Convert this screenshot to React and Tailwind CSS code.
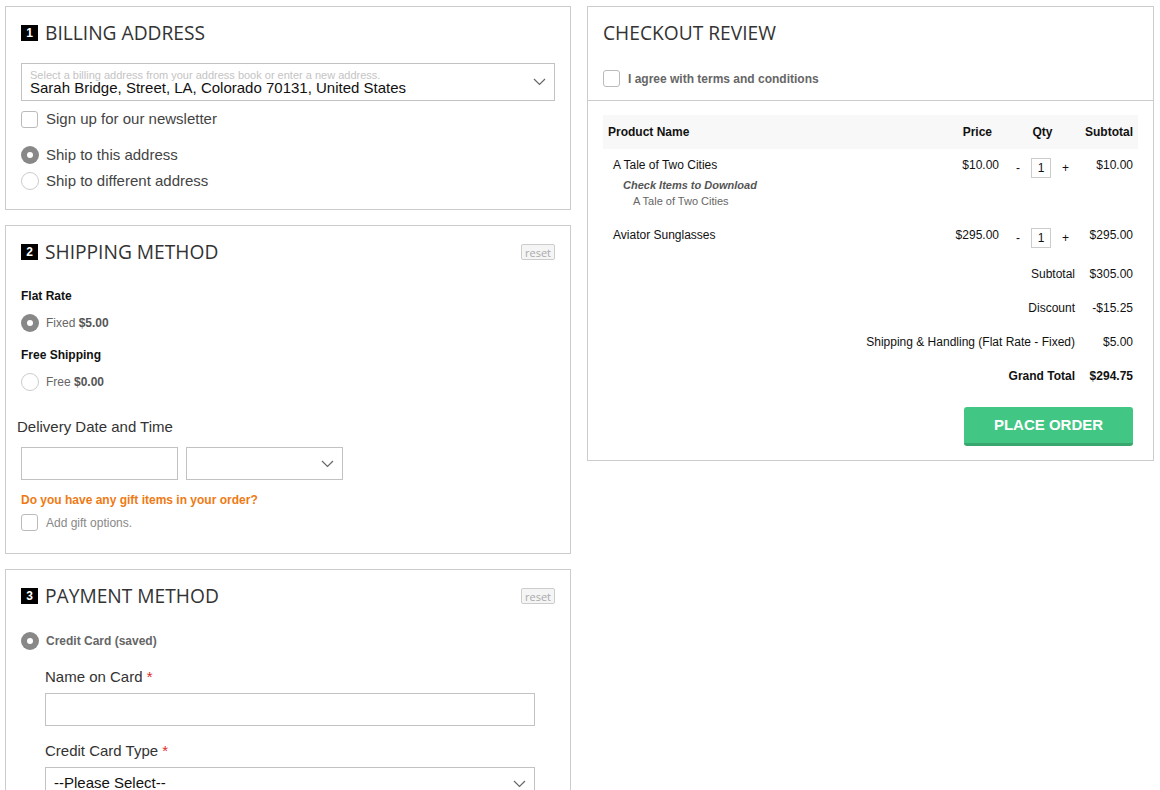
import { useState } from "react"

const heading = "font-['Open_Sans',sans-serif] text-[19.2px] text-[#333] leading-[26px]"

function Chevron() {
  return (
    <svg width="13" height="8" viewBox="0 0 13 8" fill="none" className="shrink-0">
      <polyline points="1,1 6.5,6.5 12,1" stroke="#666" strokeWidth="1.2" />
    </svg>
  )
}

function StepHeading({ n, title, reset }) {
  return (
    <div className="flex items-center h-[26px]">
      {n && (
        <span className="w-[17px] h-[16px] bg-black text-white text-[12px] font-bold flex items-center justify-center mr-[7px] leading-none">
          {n}
        </span>
      )}
      <h2 className={heading}>{title}</h2>
      {reset && (
        <button className="ml-auto w-[34px] h-[16px] border border-[#ccc] bg-[#f5f5f5] rounded-[2px] text-[11px] text-[#aaa] leading-none font-['Open_Sans',sans-serif]">
          reset
        </button>
      )}
    </div>
  )
}

function Checkbox({ checked, onClick }) {
  return (
    <span
      onClick={onClick}
      className="w-[17px] h-[17px] rounded-[3px] border border-[#bbb] bg-white shrink-0 flex items-center justify-center"
    >
      {checked && <span className="w-[9px] h-[9px] bg-[#888] rounded-[1px]" />}
    </span>
  )
}

function Radio({ checked, onClick }) {
  return checked ? (
    <span onClick={onClick} className="w-[18px] h-[18px] rounded-full bg-[#888] shrink-0 flex items-center justify-center">
      <span className="w-[6px] h-[6px] rounded-full bg-white" />
    </span>
  ) : (
    <span onClick={onClick} className="w-[18px] h-[18px] rounded-full border border-[#ccc] bg-white shrink-0" />
  )
}

const card = "border border-[#ccc] bg-white px-[15px] pt-[13px]"

export default function App() {
  const [ship, setShip] = useState("same")
  const [method, setMethod] = useState("flat")
  const [newsletter, setNewsletter] = useState(false)
  const [gift, setGift] = useState(false)
  const [agree, setAgree] = useState(false)
  const [qty, setQty] = useState({ tale: 1, aviator: 1 })

  const items = [
    { id: "tale", name: "A Tale of Two Cities", price: 10, download: true },
    { id: "aviator", name: "Aviator Sunglasses", price: 295 },
  ]

  const changeQty = (id, d) => setQty((q) => ({ ...q, [id]: Math.max(1, q[id] + d) }))

  return (
    <div className="h-[790px] overflow-hidden bg-white font-['Liberation_Sans',Arial,sans-serif] text-[#333]">
      <div className="flex items-start pl-[5px] pt-[6px] gap-[16px]">
        {/* left column */}
        <div className="w-[566px] flex flex-col gap-[15px]">
          {/* Billing */}
          <div className={`${card} pb-[19px]`}>
            <StepHeading n="1" title="BILLING ADDRESS" />
            <div className="relative mt-[17px] h-[38px] border border-[#c2c2c2] pl-[8px] pt-[5px]">
              <div className="text-[11px] leading-[12px] text-[#c4c4c4]">
                Select a billing address from your address book or enter a new address.
              </div>
              <div className="text-[15px] leading-[14px] text-[#111]">
                Sarah Bridge, Street, LA, Colorado 70131, United States
              </div>
              <div className="absolute right-[8px] top-1/2 -translate-y-1/2">
                <Chevron />
              </div>
            </div>
            <label className="mt-[10px] h-[17px] flex items-center gap-[8px] text-[15px] text-[#444]">
              <Checkbox checked={newsletter} onClick={() => setNewsletter(!newsletter)} />
              Sign up for our newsletter
            </label>
            <label className="mt-[18px] h-[18px] flex items-center gap-[7px] text-[15px] text-[#444]">
              <Radio checked={ship === "same"} onClick={() => setShip("same")} />
              Ship to this address
            </label>
            <label className="mt-[8px] h-[18px] flex items-center gap-[7px] text-[15px] text-[#444]">
              <Radio checked={ship === "diff"} onClick={() => setShip("diff")} />
              Ship to different address
            </label>
          </div>

          {/* Shipping */}
          <div className={`${card} pb-[22px]`}>
            <StepHeading n="2" title="SHIPPING METHOD" reset />
            <div className="mt-[23px] text-[12px] leading-[16px] font-bold text-[#111]">Flat Rate</div>
            <label className="mt-[10px] h-[18px] flex items-center gap-[7px] text-[12px] text-[#666]">
              <Radio checked={method === "flat"} onClick={() => setMethod("flat")} />
              <span>
                Fixed <b className="text-[#555]">$5.00</b>
              </span>
            </label>
            <div className="mt-[15px] text-[12px] leading-[16px] font-bold text-[#111]">Free Shipping</div>
            <label className="mt-[10px] h-[18px] flex items-center gap-[7px] text-[12px] text-[#666]">
              <Radio checked={method === "free"} onClick={() => setMethod("free")} />
              <span>
                Free <b className="text-[#555]">$0.00</b>
              </span>
            </label>
            <div className="mt-[27px] -ml-[4px] text-[15px] leading-[18px] text-[#333]">Delivery Date and Time</div>
            <div className="mt-[11px] flex gap-[8px]">
              <input className="w-[157px] h-[33px] border border-[#c2c2c2] outline-none px-2 text-[13px]" />
              <div className="w-[157px] h-[33px] border border-[#c2c2c2] flex items-center justify-end pr-[8px]">
                <Chevron />
              </div>
            </div>
            <div className="mt-[12px] text-[12px] leading-[16px] font-bold text-[#ee7a14]">
              Do you have any gift items in your order?
            </div>
            <label className="mt-[6px] h-[17px] flex items-center gap-[8px] text-[12px] text-[#888]">
              <Checkbox checked={gift} onClick={() => setGift(!gift)} />
              Add gift options.
            </label>
          </div>

          {/* Payment */}
          <div className={`${card} pb-[30px]`}>
            <StepHeading n="3" title="PAYMENT METHOD" reset />
            <label className="mt-[23px] h-[18px] flex items-center gap-[7px] text-[12px] font-bold text-[#666]">
              <Radio checked />
              Credit Card (saved)
            </label>
            <div className="ml-[24px]">
              <div className="mt-[18px] text-[15px] leading-[18px] text-[#333]">
                Name on Card <span className="text-[#e02b27]">*</span>
              </div>
              <input className="mt-[7px] w-[490px] h-[33px] border border-[#c2c2c2] outline-none px-2 text-[15px]" />
              <div className="mt-[16px] text-[15px] leading-[18px] text-[#333]">
                Credit Card Type <span className="text-[#e02b27]">*</span>
              </div>
              <div className="mt-[7px] w-[490px] h-[33px] border border-[#c2c2c2] flex items-center justify-between pl-[8px] pr-[8px] text-[15px] text-[#111]">
                --Please Select--
                <Chevron />
              </div>
              <div className="mt-[16px] text-[15px] leading-[18px] text-[#333]">
                Credit Card Number <span className="text-[#e02b27]">*</span>
              </div>
              <input className="mt-[7px] w-[490px] h-[33px] border border-[#c2c2c2] outline-none px-2 text-[15px]" />
            </div>
          </div>
        </div>

        {/* right column */}
        <div className="w-[567px] border border-[#ccc] bg-white">
          <div className="px-[15px] pt-[13px] pb-[13px] border-b border-[#ccc]">
            <div className="flex items-center h-[26px]">
              <h2 className={heading}>CHECKOUT REVIEW</h2>
            </div>
            <label className="mt-[24px] h-[17px] flex items-center gap-[8px] text-[12px] font-bold text-[#666]">
              <Checkbox checked={agree} onClick={() => setAgree(!agree)} />
              I agree with terms and conditions
            </label>
          </div>

          <div className="px-[15px] pt-[14px] pb-[14px] text-[12px] text-[#111]">
            <div className="grid grid-cols-[1fr_81px_75px_58px] h-[34px] items-center bg-[#f8f8f8] font-bold">
              <div className="pl-[5px]">Product Name</div>
              <div className="text-right pr-[13px]">Price</div>
              <div className="text-center">Qty</div>
              <div className="text-right pr-[5px]">Subtotal</div>
            </div>

            {items.map((it, i) => (
              <div key={it.id} className={`grid grid-cols-[1fr_81px_75px_58px] items-start ${i > 0 ? "mt-[11px]" : ""}`}>
                <div className="pt-[8px] pl-[10px]">
                  <div className="leading-[16px]">{it.name}</div>
                  {it.download && (
                    <>
                      <div className="mt-[5px] pl-[10px] text-[11px] leading-[14px] font-bold italic text-[#555]">
                        Check Items to Download
                      </div>
                      <div className="mt-[2px] pl-[20px] text-[11px] leading-[14px] text-[#666]">{it.name}</div>
                    </>
                  )}
                </div>
                <div className="pt-[8px] leading-[16px] text-right pr-[6px]">${it.price.toFixed(2)}</div>
                <div className="pt-[9px] flex items-center justify-center gap-[11px]">
                  <button onClick={() => changeQty(it.id, -1)} className="leading-none">-</button>
                  <span className="w-[20px] h-[20px] border border-[#ccc] flex items-center justify-center leading-none">
                    {qty[it.id]}
                  </span>
                  <button onClick={() => changeQty(it.id, 1)} className="leading-none">+</button>
                </div>
                <div className="pt-[8px] leading-[16px] text-right pr-[5px]">
                  ${(it.price * qty[it.id]).toFixed(2)}
                </div>
              </div>
            ))}

            <div className="mt-[9px]">
              {[
                ["Subtotal", "$305.00"],
                ["Discount", "-$15.25"],
                ["Shipping & Handling (Flat Rate - Fixed)", "$5.00"],
                ["Grand Total", "$294.75", true],
              ].map(([label, value, bold]) => (
                <div key={label} className={`flex justify-end items-center h-[34px] ${bold ? "font-bold" : ""}`}>
                  <span className="pr-[5px]">{label}</span>
                  <span className="w-[58px] text-right pr-[5px]">{value}</span>
                </div>
              ))}
            </div>

            <div className="mt-[14px] flex justify-end pr-[5px]">
              <button className="w-[169px] h-[39px] bg-[#41c684] border-b-[3px] border-[#37a76d] rounded-[3px] text-white font-bold text-[15px]">
                PLACE ORDER
              </button>
            </div>
          </div>
        </div>
      </div>
    </div>
  )
}
